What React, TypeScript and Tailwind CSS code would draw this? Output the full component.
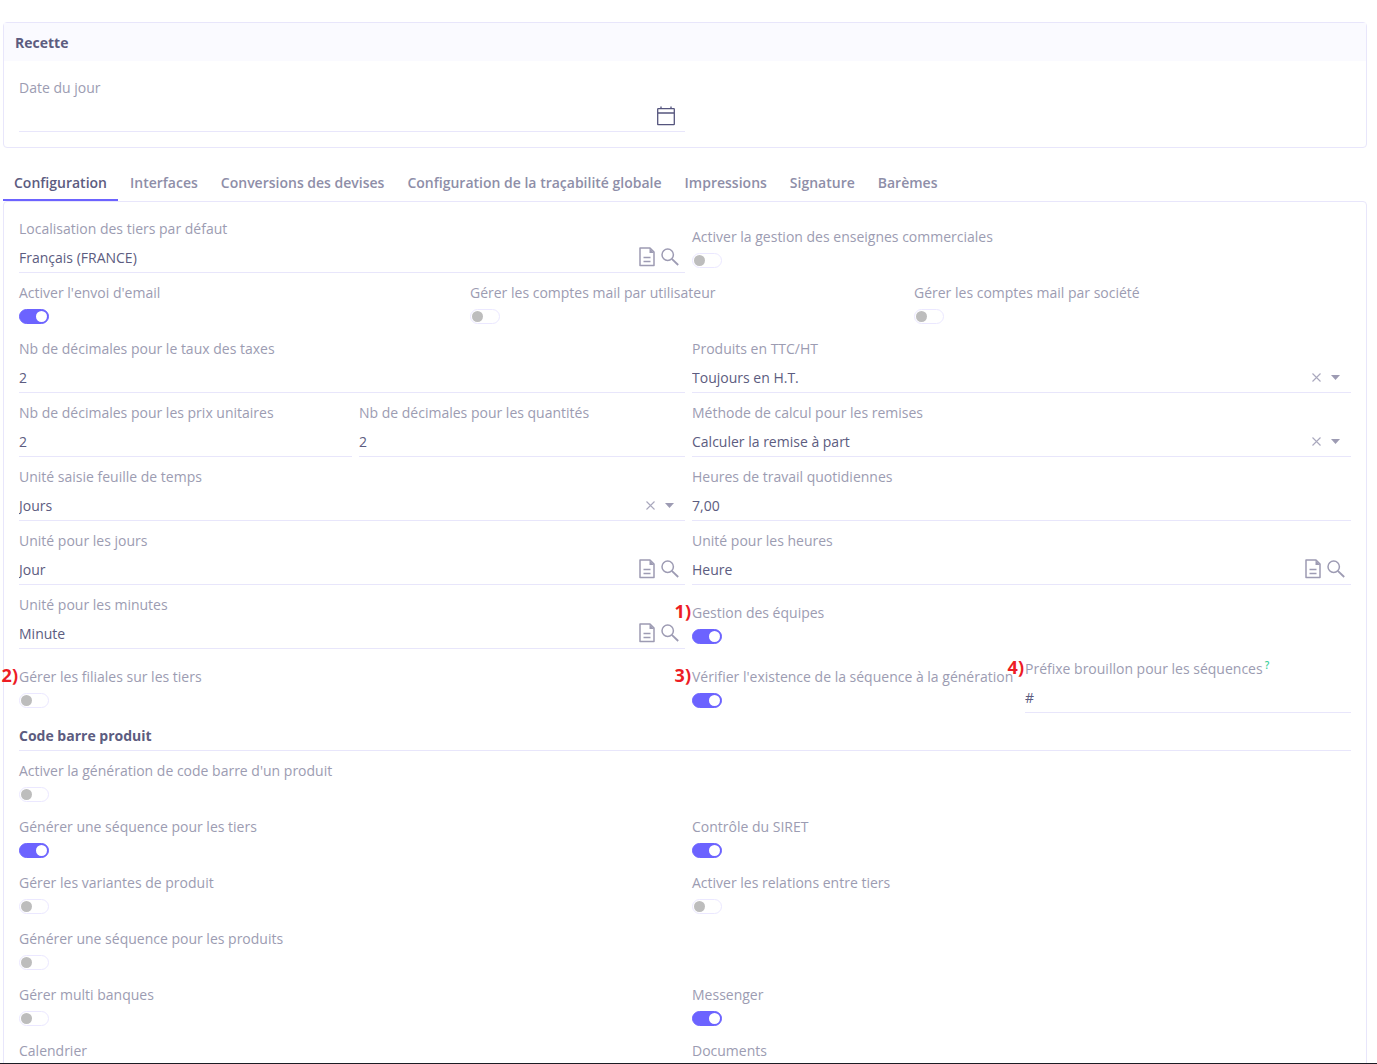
import React, { useId, useState } from 'react'
import clsx from 'clsx'

const tabs = [
  'Configuration',
  'Interfaces',
  'Conversions des devises',
  'Configuration de la traçabilité globale',
  'Impressions',
  'Signature',
  'Barèmes',
]

function Marker({ text }: { text: string }) {
  return <span className="absolute right-full bottom-0 pr-px text-[18px] leading-7 font-bold text-[#ed1c24]">{text}</span>
}

function FieldLabel({ id, label, mark, help }: { id: string; label: string; mark?: string; help?: boolean }) {
  return (
    <div className="relative h-6">
      {mark && <Marker text={mark} />}
      <label htmlFor={id} className="block leading-6 whitespace-nowrap text-[#9c9cb2]">
        {label}
        {help && <sup className="ml-0.5 text-[10px] font-semibold text-[#3ccf9b]">?</sup>}
      </label>
    </div>
  )
}

function DocIcon() {
  return (
    <svg width="16" height="20" viewBox="0 0 16 20" fill="none" stroke="#9d9bb3" strokeWidth="1.5">
      <path d="M1 1h10l4 4v13.500H1z" strokeLinejoin="round" />
      <path d="M10.500 1v5H15z" fill="#9d9bb3" stroke="none" />
      <path d="M4.500 10.500h7M4.500 14.500h7" />
    </svg>
  )
}

function SearchIcon() {
  return (
    <svg width="18" height="18" viewBox="0 0 18 18" fill="none" stroke="#9d9bb3" strokeWidth="1.500">
      <circle cx="6.700" cy="6.700" r="5.700" />
      <path d="M10.800 10.800l6.400 6.200" strokeWidth="1.800" />
    </svg>
  )
}

function CalendarIcon() {
  return (
    <svg width="18" height="20" viewBox="0 0 18 20" fill="none" stroke="#55557d" strokeWidth="1.300">
      <rect x="0.700" y="2.700" width="16.600" height="16" rx="0.500" />
      <path d="M1 7h16M4 0.500v2M14 0.500v2" />
    </svg>
  )
}

type FieldProps = {
  label: string
  value?: string
  kind?: 'text' | 'date' | 'lookup' | 'select'
  mark?: string
  help?: boolean
}

function Field({ label, value = '', kind = 'text', mark, help }: FieldProps) {
  const id = useId()
  return (
    <div className="mb-2">
      <FieldLabel id={id} label={label} mark={mark} help={help} />
      <div className="flex h-8 items-center border-b border-[#e8e6fb]">
        {kind === 'select' ? (
          <div className="relative -ml-1 flex min-w-0 flex-1 items-center pt-0.5">
            <select id={id} defaultValue={value} className="w-full appearance-none bg-transparent pl-1 leading-6 outline-none">
              <option>{value}</option>
            </select>
            <div className="absolute right-[11px] flex items-center gap-2.5">
              <button type="button" aria-label="Effacer">
                <svg width="9" height="9" viewBox="0 0 9 9" stroke="#a9a8bd" strokeWidth="1.100">
                  <path d="M0.500 0.500l8 8M8.500 0.500l-8 8" />
                </svg>
              </button>
              <svg width="9" height="5" viewBox="0 0 9 5" fill="#9d9bb3">
                <path d="M0 0h9L4.500 5z" />
              </svg>
            </div>
          </div>
        ) : (
          <input
            id={id}
            type="text"
            defaultValue={value}
            className="-ml-1 min-w-0 flex-1 bg-transparent pt-0.5 pl-1 leading-6 outline-none"
          />
        )}
        {kind === 'date' && (
          <button type="button" aria-label="Calendrier" className="mr-2.5">
            <CalendarIcon />
          </button>
        )}
        {kind === 'lookup' && (
          <div className="mr-1.5 flex items-center gap-1.5">
            <button type="button" aria-label="Ouvrir">
              <DocIcon />
            </button>
            <button type="button" aria-label="Rechercher">
              <SearchIcon />
            </button>
          </div>
        )}
      </div>
    </div>
  )
}

function Toggle({ label, on = false, mark }: { label: string; on?: boolean; mark?: string }) {
  const id = useId()
  const [checked, setChecked] = useState(on)
  return (
    <div className="h-14">
      <FieldLabel id={id} label={label} mark={mark} />
      <input
        id={id}
        type="checkbox"
        role="switch"
        checked={checked}
        onChange={() => setChecked(!checked)}
        className={clsx(
          'mt-1 flex h-[15px] w-[30px] appearance-none items-center rounded-full border px-px before:h-[11px] before:w-[11px] before:rounded-full',
          checked
            ? 'justify-end border-[#6c63ff] bg-[#6c63ff] before:bg-white'
            : 'border-[#ebe8ff] bg-white before:bg-[#bdbdbd]'
        )}
      />
    </div>
  )
}

function Row({ cols, children }: { cols: 2 | 3 | 4; children: React.ReactNode }) {
  return (
    <div
      className={clsx(
        'grid items-end *:not-first:pl-[7px]',
        cols === 2 && 'grid-cols-2',
        cols === 3 && 'grid-cols-3',
        cols === 4 && 'grid-cols-4'
      )}
    >
      {children}
    </div>
  )
}

export default function App() {
  const [current, setCurrent] = useState('Configuration')
  return (
    <div className="h-screen overflow-hidden border-b border-[#1c1c24] bg-white pt-[22px] pr-2.5 pl-[3px] font-['Open_Sans','Noto_Sans',sans-serif] text-sm text-[#5c5c80]">
      <section className="rounded border border-[#e8e6fb]">
        <h2 className="bg-[#fafaff] px-[11px] pt-[9px] pb-[7px] leading-[22px] font-bold">Recette</h2>
        <div className="grid grid-cols-2 px-[15px] pt-[15px] pb-[7px]">
          <Field label="Date du jour" kind="date" />
        </div>
      </section>

      <div role="tablist" className="mt-4 flex gap-px">
        {tabs.map((tab) => (
          <button
            key={tab}
            type="button"
            role="tab"
            aria-selected={tab === current}
            onClick={() => setCurrent(tab)}
            className={clsx(
              'h-[37px] border-b-2 px-[11px] pt-0.5 font-semibold whitespace-nowrap',
              tab === current ? 'border-[#6c63ff]' : 'border-transparent text-[#8e8ea8]'
            )}
          >
            {tab}
          </button>
        ))}
      </div>

      <main className="rounded border border-[#e8e6fb] px-[15px] py-[15px]">
        <Row cols={2}>
          <Field label="Localisation des tiers par défaut" value="Français (FRANCE)" kind="lookup" />
          <Toggle label="Activer la gestion des enseignes commerciales" />
        </Row>
        <Row cols={3}>
          <Toggle label="Activer l'envoi d'email" on />
          <Toggle label="Gérer les comptes mail par utilisateur" />
          <Toggle label="Gérer les comptes mail par société" />
        </Row>
        <Row cols={2}>
          <Field label="Nb de décimales pour le taux des taxes" value="2" />
          <Field label="Produits en TTC/HT" value="Toujours en H.T." kind="select" />
        </Row>
        <Row cols={2}>
          <Row cols={2}>
            <Field label="Nb de décimales pour les prix unitaires" value="2" />
            <Field label="Nb de décimales pour les quantités" value="2" />
          </Row>
          <Field label="Méthode de calcul pour les remises" value="Calculer la remise à part" kind="select" />
        </Row>
        <Row cols={2}>
          <Field label="Unité saisie feuille de temps" value="Jours" kind="select" />
          <Field label="Heures de travail quotidiennes" value="7,00" />
        </Row>
        <Row cols={2}>
          <Field label="Unité pour les jours" value="Jour" kind="lookup" />
          <Field label="Unité pour les heures" value="Heure" kind="lookup" />
        </Row>
        <Row cols={2}>
          <Field label="Unité pour les minutes" value="Minute" kind="lookup" />
          <Toggle label="Gestion des équipes" on mark="1)" />
        </Row>
        <Row cols={4}>
          <div className="col-span-2">
            <Toggle label="Gérer les filiales sur les tiers" mark="2)" />
          </div>
          <Toggle label="Vérifier l'existence de la séquence à la génération" on mark="3)" />
          <Field label="Préfixe brouillon pour les séquences" value="#" mark="4)" help />
        </Row>
        <h3 className="mb-2 h-[30px] border-b border-[#e8e6fb] leading-[30px] font-bold">Code barre produit</h3>
        <Toggle label="Activer la génération de code barre d'un produit" />
        <Row cols={2}>
          <Toggle label="Générer une séquence pour les tiers" on />
          <Toggle label="Contrôle du SIRET" on />
        </Row>
        <Row cols={2}>
          <Toggle label="Gérer les variantes de produit" />
          <Toggle label="Activer les relations entre tiers" />
        </Row>
        <Toggle label="Générer une séquence pour les produits" />
        <Row cols={2}>
          <Toggle label="Gérer multi banques" />
          <Toggle label="Messenger" on />
        </Row>
        <Row cols={2}>
          <Toggle label="Calendrier" />
          <Toggle label="Documents" />
        </Row>
      </main>
    </div>
  )
}
